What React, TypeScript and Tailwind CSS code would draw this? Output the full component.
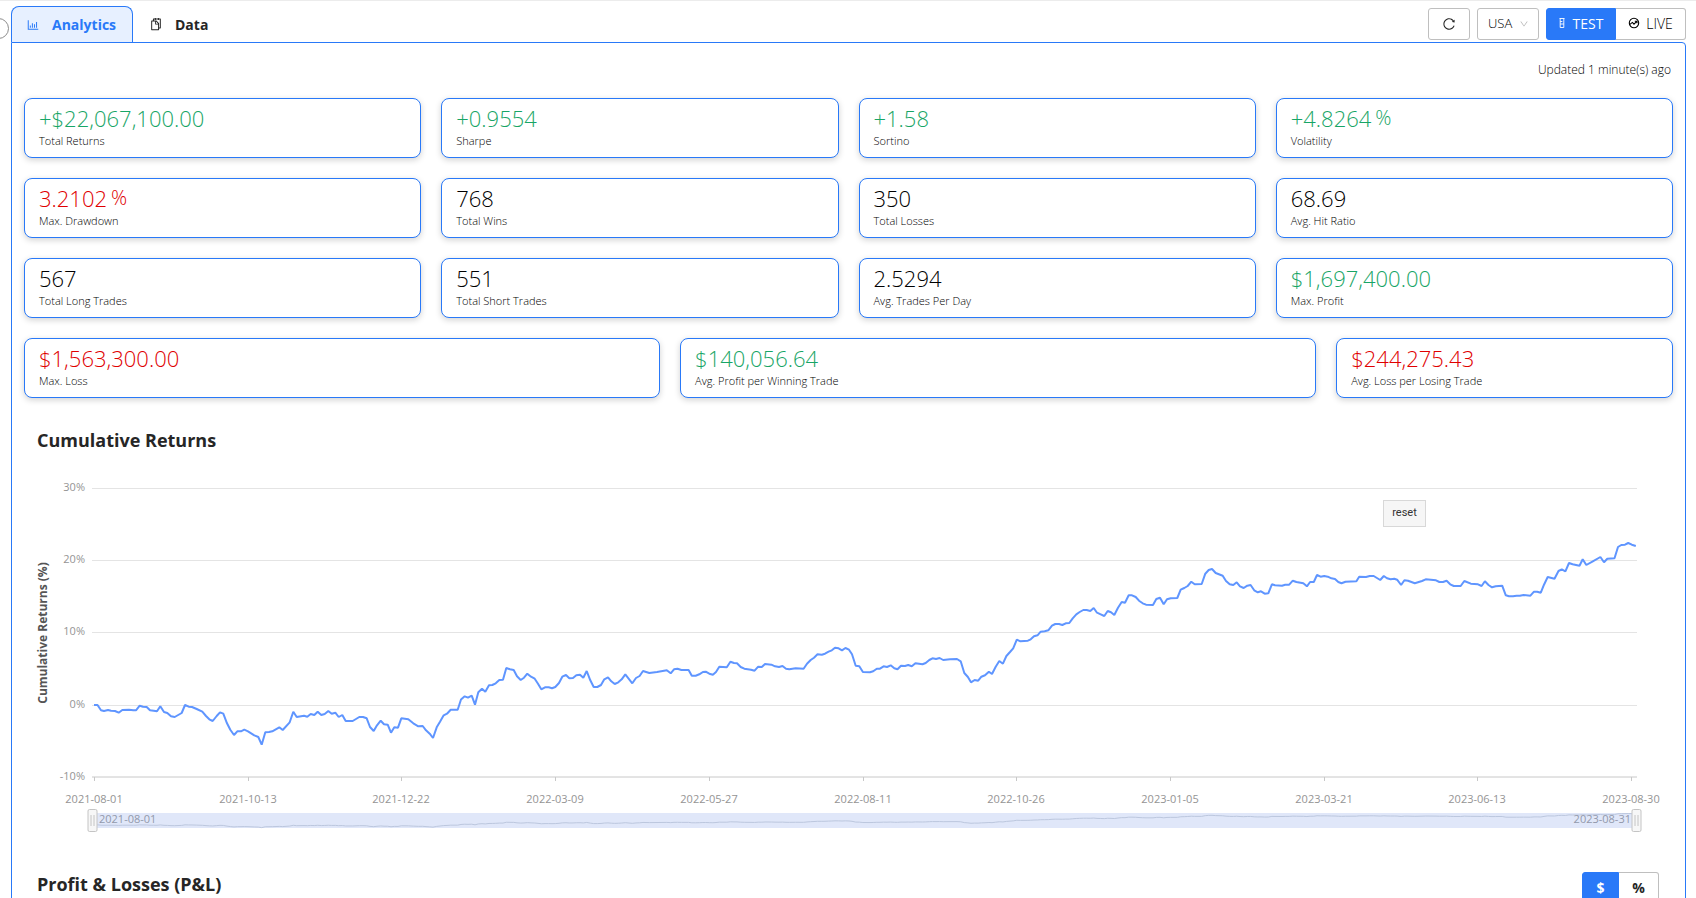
import { useState } from "react";
import type { ReactNode } from "react";
import {
  AiOutlineBarChart,
  AiOutlineDown,
  AiOutlineReload,
  AiOutlineSnippets,
} from "react-icons/ai";

type Tone = "up" | "down" | "plain";
type Metric = { value: string; unit?: string; label: string; tone: Tone };

const METRICS: Metric[] = [
  { value: "+$22,067,100.00", label: "Total Returns", tone: "up" },
  { value: "+0.9554", label: "Sharpe", tone: "up" },
  { value: "+1.58", label: "Sortino", tone: "up" },
  { value: "+4.8264", unit: "%", label: "Volatility", tone: "up" },
  { value: "3.2102", unit: "%", label: "Max. Drawdown", tone: "down" },
  { value: "768", label: "Total Wins", tone: "plain" },
  { value: "350", label: "Total Losses", tone: "plain" },
  { value: "68.69", label: "Avg. Hit Ratio", tone: "plain" },
  { value: "567", label: "Total Long Trades", tone: "plain" },
  { value: "551", label: "Total Short Trades", tone: "plain" },
  { value: "2.5294", label: "Avg. Trades Per Day", tone: "plain" },
  { value: "$1,697,400.00", label: "Max. Profit", tone: "up" },
];

const TRADE_METRICS: Metric[] = [
  { value: "$1,563,300.00", label: "Max. Loss", tone: "down" },
  { value: "$140,056.64", label: "Avg. Profit per Winning Trade", tone: "up" },
  { value: "$244,275.43", label: "Avg. Loss per Losing Trade", tone: "down" },
];

const TONES: Record<Tone, string> = {
  up: "text-[#18a566]",
  down: "text-[#e00000]",
  plain: "text-[#000000]",
};

const GRID = [
  { y: 488, label: "30%" },
  { y: 560, label: "20%" },
  { y: 632, label: "10%" },
  { y: 705, label: "0%" },
];

const DATES = [
  "2021-08-01",
  "2021-10-13",
  "2021-12-22",
  "2022-03-09",
  "2022-05-27",
  "2022-08-11",
  "2022-10-26",
  "2023-01-05",
  "2023-03-21",
  "2023-06-13",
  "2023-08-30",
];

const SERIES = `94,705 97.5,705 101,710.3 104,711 108,710 111,710.7 115,711 118.7,712.7 122.3,710 129,709.8
133.3,710.3 136,710.3 139.7,705.7 143,706.7 146.7,707 150,710.3 153.7,710.7 157,711.3 160.3,706.3 164,712
167.3,713 171,716.3 174.7,717 181.7,713 185,705 188.7,706.7 192,707 196.7,709 202.3,711.7 206,716
209.3,719.3 212.7,721 216.7,716 220,712.3 223.3,713.7 227,723.3 230.3,729.7 234,735 237.3,731.3 241,731.3
244.3,729.7 248,731.3 254.3,735.3 258.3,737 261.7,744.7 265.3,732.3 269,732 272.3,731.3 279.3,727.3
282.7,730 289.7,722.3 293.3,711.7 296.7,717 304,715.7 307.3,716.7 310.7,714 314.3,715 317.7,711.7 321.3,715
324.7,714 328.3,711 331.7,713.7 335.3,712.7 338.7,717 342.3,715 345.7,721 352.7,721 356,719 359.3,717
363,717 366.7,718.3 370,727 373.7,731 377,725.3 380.7,720.7 384,724.3 387.7,724.7 391,732.7 394.3,727.3
398,727.7 401.3,718.3 408.3,719.3 413.3,723.3 418.3,726.3 422.7,726 426,730.3 429.7,733.7 433,738
436.7,727.3 440,721.7 443.7,715.3 447,713.7 450.7,709.7 457.7,709.7 461,699.5 464.7,696.3 468,697.7
471.7,695.7 475,704.7 478.3,692.3 482,688.7 485.3,691.7 489,685.3 492.3,685 495.7,683.3 499.3,680 503,679.7
506.3,668 510,669.3 513.7,670 517,676.3 520.7,680 524,677.7 527.3,673.7 531,676.7 534.7,678.7 538,683.7
541.3,689.3 545,687.3 548.7,687.3 552,688.3 555.3,687 559,683 562.3,676.7 566,675 569.3,678.3 573,678
576.3,675.3 580,674.7 583.3,677.7 586.7,671 590.3,680.3 593.7,687 597.3,687 601,685 604.3,679.3 608,677.3
611.3,681.3 614.7,684 618.3,682.3 621.7,679.3 625.3,674.3 632.3,683.3 636,678 639.6,676 643,671 649.3,673
657,672 666.8,670.3 670.7,673.3 674,669.3 677.5,668.7 681.4,670 688.6,670 691.8,675.7 695.7,675.7
699.3,674.3 702.9,672 705.7,671.7 709.3,673.7 712.9,674.7 716,672 719.3,666.7 726.8,667.3 730.4,661.7
734,663 737,663.3 740.7,667 744.3,668.7 751,669.7 754.6,670.7 758.2,666.7 761.8,667 765,664 771.4,664.7
775,666.3 779,667 782.5,666 786,668.7 789.3,669.3 795.7,668.3 803.6,668.7 807,663.7 810.7,660 814,657.7
817.5,654.3 821.8,654.7 825,653.7 828.6,651.7 831.8,650.3 835,647.7 838.6,648.3 842,650.3 845.4,648
849,649.7 852,654.3 855.7,665.7 859.3,666.3 862.9,672 870,672.3 873.2,671.3 876.8,668.7 880,668.7
883.6,666.3 887,667 890.7,665.3 894.3,668.3 897.5,669.3 901,665.7 905,666 908.2,665 911.8,666.3
915.4,663.3 922.5,664.3 925.7,663 929.3,660 932.5,658.3 936,659 939.6,658 943.2,660 950,659.3 957,659
960.7,661.3 964.3,673 967.9,677 971,682.3 974.6,680 978.2,680.7 981.4,676.7 985,675.3 988.9,671.7 992,674
995.7,666.7 999.3,661 1002.9,663.7 1006.4,656 1010,652 1013.2,648.3 1016.8,639.7 1020.4,641.3 1027.9,640.7
1030.7,639.3 1034,636.3 1037.5,635.3 1040.7,631.7 1044.7,631.3 1048.3,630.3 1052,625.7 1055.3,624 1059,624
1062.3,625 1065.7,623.3 1069.3,623 1072.7,618.3 1076.3,614.3 1079.7,612 1083.3,610 1086.7,610 1090.3,611
1093.7,608 1097,612.7 1100.7,614.3 1104.3,616 1107.7,611 1111,612.3 1114.3,615 1118,607.7 1121.7,602
1125,602.7 1128.7,595.3 1132,595.3 1135.7,597 1139,600.7 1142.7,603.3 1146,604.7 1153,605 1156.3,599
1160,597.7 1163.7,604.3 1167,599.3 1170.7,598.3 1177.3,598 1180.7,589.7 1184.3,588 1187.7,586 1191.3,581.7
1194.7,584.3 1201.7,584 1205.3,573.7 1208.7,570 1212,569 1215.7,573 1222.7,575.7 1226,581 1229.7,584.3
1233.3,585 1236.7,582.3 1240,586.3 1243.7,588 1247.3,585.7 1250.6,585 1254.2,590.3 1257.8,592.3
1261,591.3 1264.7,593.7 1268.3,593.3 1271.9,584.3 1275,585.3 1282,585.7 1285.2,584.7 1289.2,584.7
1292.8,580.7 1296.4,582 1303.3,583.3 1306.9,586.3 1310.1,582 1313.8,582 1317,575 1320.6,576.7 1324.2,576
1327.8,576.7 1331.4,578.3 1335,579 1338.3,582 1341.5,583.3 1345.5,581.7 1356.4,581.3 1359.2,576.7 1366,577
1369.7,576 1373.7,576 1380.2,580 1383.8,576 1387,578.3 1390.6,579.3 1394.3,578.7 1397.1,579.7 1401.1,585
1404.4,580.3 1408,580.7 1414.8,583.3 1422,581 1425.7,579.3 1436,580.3 1439.4,582 1443,582 1446.6,580.7
1450.2,584.3 1453.8,586 1460.7,586 1464.3,581 1470.8,583.7 1478,584.3 1481.6,586 1484.9,581.3 1488.5,585
1492,587.3 1495.7,586.3 1502.2,585.7 1505.8,595.3 1509,596.3 1513,596.3 1516.6,595.7 1519.9,595.7
1523.5,595 1530.4,595.7 1534,591.7 1537.2,591.7 1540.8,592.7 1544,584.7 1547.7,577 1554.5,578.7
1558.5,571 1561.8,569.3 1565.4,571.3 1569,563 1572.6,564.3 1579.5,565.7 1582.7,559.3 1586.3,565
1592.8,561.3 1600.4,557 1604,562.3 1607.3,558.7 1614.5,558.3 1618,547 1621.3,545 1625,544.7 1628.2,543
1631.8,544.7 1635.8,546`;

// The same series squeezed into the height of the zoom slider.
const OVERVIEW = SERIES.split(/\s+/)
  .map((pair) => {
    const [x, y] = pair.split(",").map(Number);
    return `${x},${(813.5 + (y - 543) * 0.07).toFixed(2)}`;
  })
  .join(" ");

function MetricCard({ value, unit, label, tone }: Metric) {
  return (
    <div className="flex h-[60px] flex-col rounded-lg border border-[#2979f8] bg-white px-[14px] pt-[5px] font-light shadow-[0_2px_6px_rgba(0,0,0,0.18)]">
      <div className={`flex gap-1 text-[22px] leading-[28px] ${TONES[tone]}`}>
        {value}
        {unit && <span className="text-[20px]">{unit}</span>}
      </div>
      <div className="text-[11px] leading-[18px] text-black">{label}</div>
    </div>
  );
}

function TubeIcon() {
  return (
    <svg viewBox="0 0 6 12" className="h-3 w-1.5" fill="none" stroke="currentColor" aria-hidden="true">
      <path d="M.5 1.5h5M1.2 1.5v9h3.6v-9M1.2 4.5h2.2M1.2 7h3.6" strokeWidth="0.9" />
    </svg>
  );
}

function LiveIcon() {
  return (
    <svg viewBox="0 0 12 12" className="size-3" fill="none" stroke="currentColor" aria-hidden="true">
      <circle cx="6" cy="6" r="4.7" strokeWidth="1.1" />
      <path d="M1.6 7.6 4.4 5.4 6 7.2 9 4.2M6.8 4.2H9v2" strokeWidth="1.1" />
    </svg>
  );
}

function Handle({ x }: { x: number }) {
  return (
    <g stroke="#c4c4c4">
      <rect x={x} y="809.5" width="9" height="22" rx="1.5" fill="#f7f7f7" />
      <path d={`M${x + 3} 815v11M${x + 6} 815v11`} />
    </g>
  );
}

function Chart() {
  return (
    <div className="relative">
      <svg viewBox="24 470 1649 370" className="block w-full" role="img" aria-label="Cumulative Returns (%)">
        <g stroke="#e4e4e4">
          {GRID.map((line) => (
            <path key={line.label} d={`M92 ${line.y}.5H1637`} />
          ))}
        </g>
        <g stroke="#c8c8c8">
          <path d="M92 777H1637" />
          {DATES.map((date, i) => (
            <path key={date} d={`M${Math.round(94 + i * 153.7)}.5 777v4`} />
          ))}
        </g>
        <g fill="#949494" className="text-[11px]">
          {GRID.map((line) => (
            <text key={line.label} x="85" y={line.y + 3} textAnchor="end">
              {line.label}
            </text>
          ))}
          <text x="85" y="780" textAnchor="end">
            -10%
          </text>
          {DATES.map((date, i) => (
            <text key={date} x={Math.round(94 + i * 153.7)} y="803" textAnchor="middle">
              {date}
            </text>
          ))}
        </g>
        <text
          transform="translate(47 633) rotate(-90)"
          textAnchor="middle"
          fill="#555555"
          className="text-[12px] font-bold"
        >
          Cumulative Returns (%)
        </text>
        <polyline points={SERIES} fill="none" stroke="#5f95ff" strokeWidth="2" strokeLinejoin="bevel" />
        <rect x="93" y="813" width="1544" height="15" fill="#e0e7f9" />
        <polyline points={OVERVIEW} fill="none" stroke="#bcc7de" />
        <g fill="#9299ab" className="text-[11px]">
          <text x="99" y="823">
            2021-08-01
          </text>
          <text x="1631" y="823" textAnchor="end">
            2023-08-31
          </text>
        </g>
        <Handle x={88} />
        <Handle x={1632} />
      </svg>
      <button
        type="button"
        className="absolute top-[30px] right-[247px] h-[27px] w-[43px] border border-[#d8d8d8] bg-[#f6f6f6] font-['Roboto',sans-serif] text-[11px] text-[#333333]"
      >
        reset
      </button>
    </div>
  );
}

function Segment({ children, className }: { children: ReactNode; className: string }) {
  return (
    <button type="button" className={`flex h-8 items-center justify-center border pb-0.5 ${className}`}>
      {children}
    </button>
  );
}

export default function App() {
  const [region, setRegion] = useState("USA");

  return (
    <div className="relative h-screen overflow-hidden border-t border-[#ececec] bg-white pt-[5px] pr-[10px] pl-[11px] font-['Open_Sans',sans-serif] text-[#262626]">
      <button
        type="button"
        aria-label="Collapse menu"
        className="absolute top-[17px] -left-3 size-[21px] rounded-full border border-[#8c8c8c] bg-white"
      />

      <header className="flex h-9 items-start justify-between">
        <nav className="flex">
          <a
            href="#analytics"
            className="flex h-9 w-[122px] items-center gap-3 rounded-t-lg border border-b-0 border-[#2979f8] bg-[#e7f0ff] pl-[14px] text-[14px] font-bold text-[#2979f8]"
          >
            <AiOutlineBarChart className="size-3.5" />
            Analytics
          </a>
          <a href="#data" className="flex h-9 items-center gap-3 pl-4 text-[14px] font-bold">
            <AiOutlineSnippets className="size-3.5" />
            Data
          </a>
        </nav>

        <div className="flex pt-0.5 text-[14px]">
          <button
            type="button"
            aria-label="Reload"
            className="mr-[7px] flex h-8 w-[42px] items-center justify-center rounded-[3px] border border-[#bfbfbf]"
          >
            <AiOutlineReload className="size-3.5" />
          </button>
          <div className="relative mr-[7px]">
            <select
              aria-label="Region"
              value={region}
              onChange={(event) => setRegion(event.target.value)}
              className="h-8 w-[62px] appearance-none rounded-[3px] border border-[#bfbfbf] bg-white pl-2.5 text-[13px] font-light text-black"
            >
              <option>USA</option>
            </select>
            <AiOutlineDown className="pointer-events-none absolute top-[11px] right-2.5 size-2.5 text-[#b5b5b5]" />
          </div>
          <Segment className="w-[70px] gap-2 rounded-l-[3px] border-[#2979f8] bg-[#2979f8] text-[14px] text-white">
            <TubeIcon />
            TEST
          </Segment>
          <Segment className="w-[70px] gap-1.5 rounded-r-[3px] border-l-0 border-[#bfbfbf] text-[14px] font-light text-black">
            <LiveIcon />
            LIVE
          </Segment>
        </div>
      </header>

      <main className="min-h-screen rounded-tr-[4px] border border-[#2979f8] px-3">
        <p className="pt-[18px] pr-0.5 text-right text-[12px] leading-[18px] font-light text-black">
          Updated 1 minute(s) ago
        </p>

        <section className="grid grid-cols-4 gap-5 pt-[19px]">
          {METRICS.map((metric) => (
            <MetricCard key={metric.label} {...metric} />
          ))}
        </section>
        <section className="grid grid-cols-[17fr_17fr_9fr] gap-5 pt-5">
          {TRADE_METRICS.map((metric) => (
            <MetricCard key={metric.label} {...metric} />
          ))}
        </section>

        <section className="pt-[29px]">
          <h2 className="h-[43px] pl-[13px] text-[18px] leading-[26px] font-bold">Cumulative Returns</h2>
          <Chart />
        </section>

        <section className="flex items-start justify-between pt-8 pr-[14px] pl-[13px]">
          <h2 className="text-[18px] leading-[24px] font-bold">Profit &amp; Losses (P&amp;L)</h2>
          <div className="flex text-[14px] font-bold">
            <Segment className="w-[37px] rounded-l-[3px] border-[#2979f8] bg-[#2979f8] text-white">$</Segment>
            <Segment className="w-10 rounded-r-[3px] border-l-0 border-[#bfbfbf]">%</Segment>
          </div>
        </section>
      </main>
    </div>
  );
}
